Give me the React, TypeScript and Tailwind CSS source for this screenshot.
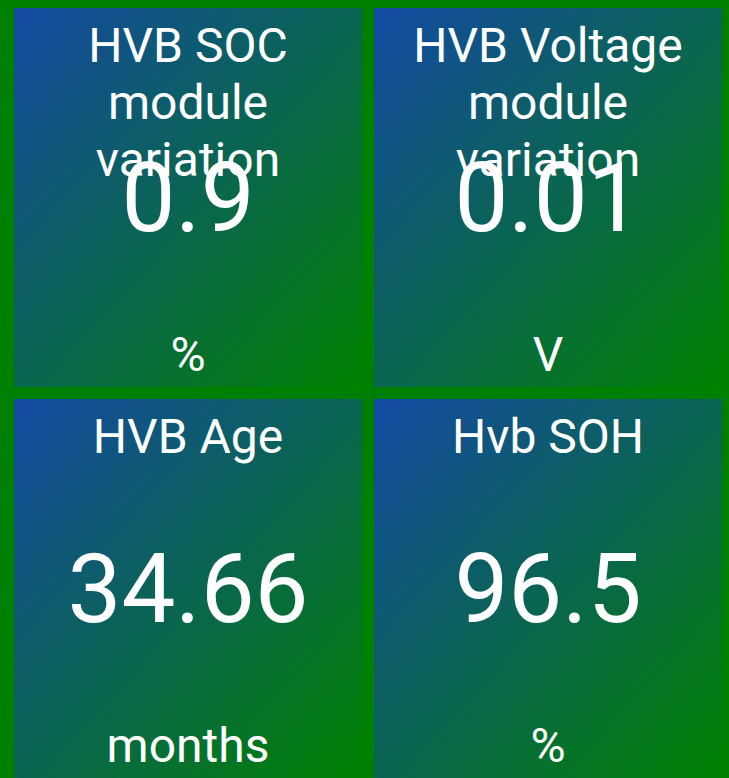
const tiles = [
  { title: 'HVB SOC module variation', value: '0.9', unit: '%' },
  { title: 'HVB Voltage module variation', value: '0.01', unit: 'V' },
  { title: 'HVB Age', value: '34.66', unit: 'months' },
  { title: 'Hvb SOH', value: '96.5', unit: '%' },
]

function Tile({ title, value, unit }: { title: string; value: string; unit: string }) {
  return (
    <div className="grid overflow-hidden bg-linear-to-br/srgb from-[#1449a3] to-[#008000] text-white">
      <div className="col-start-1 row-start-1 self-start px-2 pt-[9px] text-center text-[48px] leading-[57px]">
        {title}
      </div>
      <div className="col-start-1 row-start-1 self-center text-center text-[96px] leading-none">
        {value}
      </div>
      <div className="col-start-1 row-start-1 self-end pb-[4px] text-center text-[48px] leading-[57px]">
        {unit}
      </div>
    </div>
  )
}

export default function App() {
  return (
    <div
      className="grid h-[778px] w-[729px] grid-cols-2 grid-rows-2 gap-[12px] overflow-hidden bg-[#008000] pl-[14px] pr-[7px] pt-[8px]"
      style={{ fontFamily: 'Roboto, "Noto Sans", sans-serif' }}
    >
      {tiles.map((t) => (
        <Tile key={t.title} {...t} />
      ))}
    </div>
  )
}
